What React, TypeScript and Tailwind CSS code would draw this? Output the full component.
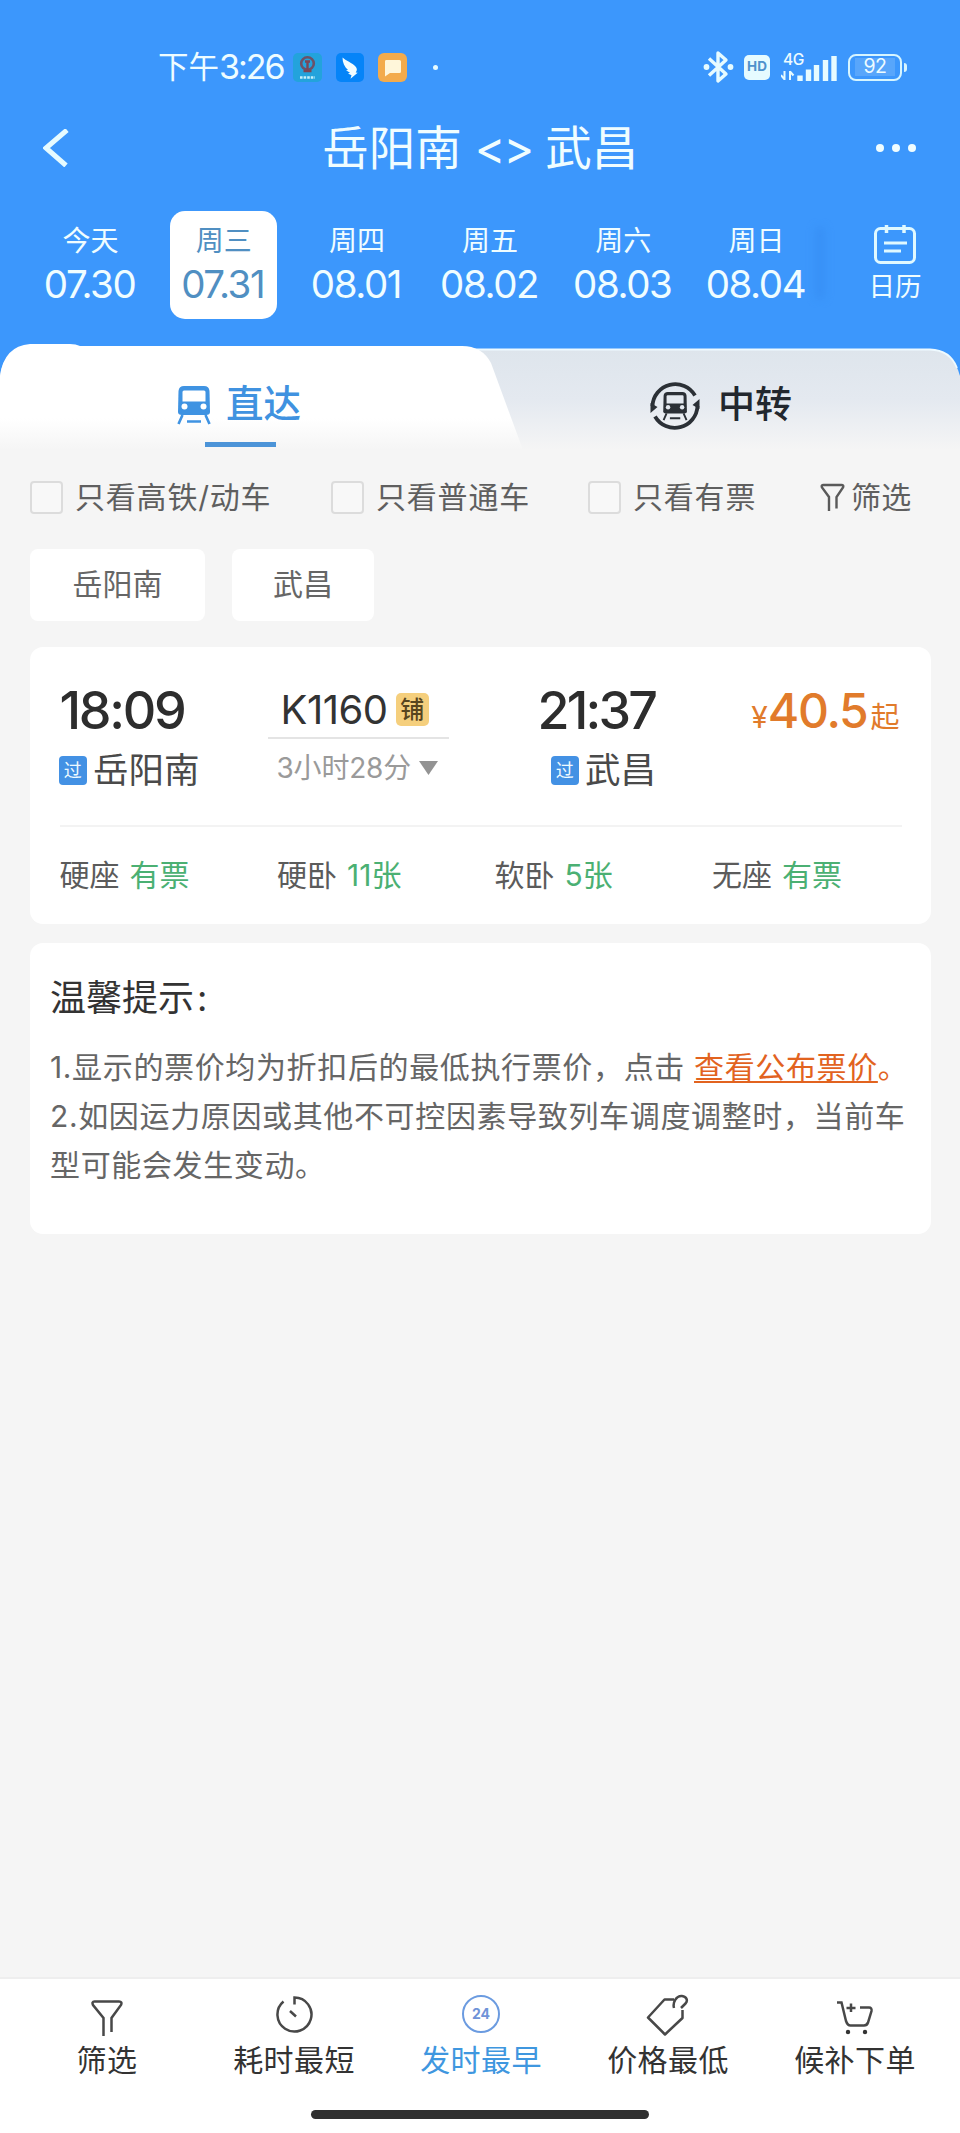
import type { ReactNode } from "react";
import clsx from "clsx";

const DAYS = [
  { label: "今天", date: "07.30" },
  { label: "周三", date: "07.31" },
  { label: "周四", date: "08.01" },
  { label: "周五", date: "08.02" },
  { label: "周六", date: "08.03" },
  { label: "周日", date: "08.04" },
];

const SEATS = [
  { name: "硬座", left: "有票" },
  { name: "硬卧", left: "11张" },
  { name: "软卧", left: "5张" },
  { name: "无座", left: "有票" },
];

function StatusBar() {
  return (
    <div className="flex h-[134px] items-center pl-[158px] pr-[53px] text-[#eefcff]">
      <span className="flex w-[126px] items-center whitespace-nowrap leading-none">
        <span className="text-[30.5px]">下午</span>
        <span className="text-[34px] tracking-[-2px]">3:26</span>
      </span>
      <svg width="29" height="29" viewBox="0 0 29 29" className="ml-[9px]">
        <rect width="29" height="29" rx="5" fill="#23a3dc" />
        <circle cx="14.5" cy="10.5" r="6.3" fill="none" stroke="#6c5268" strokeWidth="2.6" />
        <path d="M12 8.5h5M14.5 8.5v8M10.5 18h8" stroke="#7c4656" strokeWidth="2.4" fill="none" />
        <path d="M7 24.5h15" stroke="#c6f0fa" strokeWidth="2.4" strokeDasharray="2.6 1" />
      </svg>
      <svg width="28" height="29" viewBox="0 0 28 29" className="ml-[13.5px]">
        <rect width="28" height="29" rx="5" fill="#0584f8" />
        <path d="M6.5 4.5c3 3 10 5.500 13 9 1.800 2.200 1.800 4 .2 6l2 .2-7.200 6 1-3.400-3.500-1.700 2-.8-4-2.500 2-.2C8.500 14 6.500 9.500 6.500 4.500z" fill="#f2fcff" />
      </svg>
      <svg width="29" height="29" viewBox="0 0 29 29" className="ml-[14px]">
        <rect width="29" height="29" rx="6" fill="#f3ab4c" />
        <path d="M8 7h13.500a1.500 1.500 0 0 1 1.500 1.500v10a1.500 1.500 0 0 1-1.500 1.500H12l-5 3.500v-15A1.500 1.500 0 0 1 8 7z" fill="#fff6da" />
      </svg>
      <span className="ml-[26px] size-[5px] rounded-full bg-[#e6fbff]" />

      <svg width="31" height="34" viewBox="0 0 31 34" className="ml-auto">
        <path d="M6 8.500 23 24 15 31V3l8 7L6 25.500" fill="none" stroke="#e6fbff" strokeWidth="3.4" strokeLinejoin="round" />
        <circle cx="3.500" cy="17" r="2.900" fill="#e6fbff" />
        <circle cx="27.500" cy="17" r="2.900" fill="#e6fbff" />
      </svg>
      <span className="ml-[10px] flex h-[25px] w-[26px] items-center justify-center rounded-[5px] bg-[#e6fbff] text-[13.5px] font-bold leading-none text-[#4f92cc]">
        HD
      </span>
      <div className="relative ml-[11px] h-[30px] w-[56px]">
        <span className="absolute left-[2px] top-0 text-[15.5px] font-medium leading-none tracking-[-0.3px]">4G</span>
        <svg width="56" height="30" viewBox="0 0 56 30">
          <path d="M3.500 19v9M3.500 27.500 0 23M9 28v-9M9 19.500l3.500 4" stroke="#e6fbff" strokeWidth="2" fill="none" />
          <path d="M19 23.500V29M27.500 17.500V29M35.500 13V29M44.500 8V29M53 4V29" stroke="#e6fbff" strokeWidth="5.4" />
        </svg>
      </div>
      <span className="ml-[11px] flex h-[27px] w-[54px] items-center justify-center rounded-[8px] border-[2.5px] border-[#d6f5ff]">
        <span className="flex h-[18px] w-[40px] items-center justify-center bg-[#58a6fb] text-[19.5px] leading-none tracking-[-0.5px]">92</span>
      </span>
      <span className="ml-[2px] h-[9px] w-[3px] rounded-r bg-[#d6f5ff]" />
    </div>
  );
}

function TitleBar() {
  return (
    <div className="flex h-[28px] items-center justify-between pl-[43px] pr-[44px] text-[#f0fdff]">
      <svg width="27" height="38" viewBox="0 0 27 38">
        <path d="M24 1 3 19 23 36.500" fill="none" stroke="#e6fbff" strokeWidth="5" />
      </svg>
      <h1 className="ml-[15px] flex whitespace-nowrap text-[46.5px] leading-none">
        岳阳南<span className="mx-[13px] tracking-[-2px]">&lt;&gt;</span>武昌
      </h1>
      <div className="flex gap-[7.500px]">
        <span className="size-[8.500px] rounded-full bg-[#f0fdff]" />
        <span className="size-[8.500px] rounded-full bg-[#f0fdff]" />
        <span className="size-[8.500px] rounded-full bg-[#f0fdff]" />
      </div>
    </div>
  );
}

function DateStrip() {
  return (
    <div className="mt-[49px] flex h-[108px]">
      <div className="ml-[24px] grid w-[799px] grid-cols-6">
        {DAYS.map((day, i) => (
          <div key={day.date} className="flex justify-center">
            <button
              className={clsx(
                "flex h-[108px] w-[107px] flex-col items-center rounded-[15px] pt-[16px] leading-none",
                i === 1 ? "bg-white text-[#508fc2]" : "text-[#f0fdff]",
              )}
            >
              <span className="text-[28px] leading-[28px]">{day.label}</span>
              <span className="ml-[-2px] mt-[10px] text-[38.5px] leading-[38px] tracking-[-1.4px]">{day.date}</span>
            </button>
          </div>
        ))}
      </div>
      <span className="ml-[-8px] mt-[16px] h-[72px] w-[10px] bg-[#348af0] opacity-50 blur-[4px]" />
      <div className="ml-[30px] flex w-[80px] flex-col items-center pt-[14px] text-[#f0fdff]">
        <svg width="42" height="39" viewBox="0 0 42 39">
          <rect x="1.500" y="3.500" width="39" height="34" rx="5" fill="none" stroke="#e0f9ff" strokeWidth="3" />
          <path d="M12.500 0v8M30 0v8" stroke="#e0f9ff" strokeWidth="3.500" />
          <path d="M10 18h23M10 26h17" stroke="#e0f9ff" strokeWidth="2.800" />
        </svg>
        <span className="mt-[9px] text-[26.500px] leading-[27px]">日历</span>
      </div>
    </div>
  );
}

function TrainGlyph({ color, hole }: { color: string; hole: string }) {
  return (
    <>
      <path d="M7 0h20q5 0 5.500 5l.5 21q0 3-4 3H5q-4 0-4-3L1.500 5Q2 0 7 0z" fill={color} />
      <path d="M7 4.500h20q1.500 0 1.500 1.500v9.500h-23V6Q5.500 4.500 7 4.500z" fill={hole} />
      <circle cx="7.500" cy="20.500" r="3" fill={hole} />
      <circle cx="26.500" cy="20.500" r="3" fill={hole} />
      <path d="M5.500 29 1.500 38M28.500 29l4 9M10 35.500h14" stroke={color} strokeWidth="2.600" />
    </>
  );
}

function Tabs() {
  return (
    <div className="relative h-[106px] shrink-0">
      {/* the slanted tab sits over the grey one and both fade into the page */}
      <svg width="960" height="106" viewBox="0 0 960 106" className="absolute inset-0">
        <defs>
          <linearGradient id="tabIdle" x1="0" y1="0" x2="0" y2="1">
            <stop offset="0" stopColor="#dee5ec" />
            <stop offset="0.5" stopColor="#e4e9f0" />
            <stop offset="1" stopColor="#f5f5f5" />
          </linearGradient>
          <linearGradient id="tabOn" x1="0" y1="0" x2="0" y2="1">
            <stop offset="0.7" stopColor="#ffffff" />
            <stop offset="1" stopColor="#f5f5f5" />
          </linearGradient>
        </defs>
        <path d="M0 106V32Q3 5 30 5H930Q953 6 960 32V106z" fill="url(#tabIdle)" />
        <path d="M460 5.500H930Q950 6 957 24" fill="none" stroke="#eefaff" strokeWidth="1.800" />
        <path d="M0 106V32Q4 2 30 0H70Q76 0 80 2H462Q482 2 491 19L523 106z" fill="url(#tabOn)" />
      </svg>
      <div className="relative flex h-full">
        <div className="flex w-[481px] flex-col items-center">
          <div className="ml-[-3px] mt-[39px] flex h-[44px] items-center text-[#4092e0]">
            <svg width="34" height="39" viewBox="0 0 34 39">
              <TrainGlyph color="#3f93e2" hole="#ffffff" />
            </svg>
            <span className="ml-[15px] pb-[3px] text-[37.500px] font-medium leading-none">直达</span>
          </div>
          <span className="mt-[15px] h-[5px] w-[71px] bg-[#4c94d8]" />
        </div>
        <div className="flex w-[479px] justify-center text-[#22272e]">
          <div className="mt-[36px] flex h-[52px] items-center">
            <svg width="52" height="52" viewBox="0 0 52 52">
              <path d="M3.500 26A22.800 22.800 0 0 1 46 15.500" fill="none" stroke="#2b3036" strokeWidth="3.800" />
              <path d="M48.500 26A22.800 22.800 0 0 1 6 36.500" fill="none" stroke="#2b3036" strokeWidth="3.800" />
              <path d="M1.500 33V23l7 4zM50.500 19v10l-7-4z" fill="#2b3036" />
              <g transform="translate(13.500 12) scale(.74)">
                <TrainGlyph color="#2b3036" hole="#e4e9f0" />
              </g>
            </svg>
            <span className="ml-[17px] pb-[4px] text-[37px] font-medium leading-none">中转</span>
          </div>
        </div>
      </div>
    </div>
  );
}

function Check({ children, className }: { children: ReactNode; className: string }) {
  return (
    <label className={clsx("flex items-center whitespace-nowrap", className)}>
      <span className="size-[33px] rounded-[4px] border-2 border-[#dcdcdc] bg-[#f8f8f8]" />
      <span className="ml-[12px] pb-[1px] tracking-[0.8px]">{children}</span>
    </label>
  );
}

function FilterRow() {
  return (
    <div className="mt-[31px] flex h-[33px] items-center pl-[30px] text-[30px] leading-none text-[#5f5f5f]">
      <Check className="w-[301px]">只看高铁/动车</Check>
      <Check className="w-[257px]">只看普通车</Check>
      <Check className="w-[232px]">只看有票</Check>
      <svg width="25" height="29" viewBox="0 0 25 29">
        <path d="M9 28V14L2 4.500Q1 2 3.500 2h18q2.500 0 1.500 2.500L16.500 14v11.500" fill="none" stroke="#5a5a5a" strokeWidth="2.400" />
      </svg>
      <span className="ml-[6px] pb-[1px] tracking-[0.3px]">筛选</span>
    </div>
  );
}

function Pass() {
  return (
    <span className="flex size-[28.500px] items-center justify-center rounded-[4px] bg-[#4391e4] text-[18px] leading-none text-[#eefaff]">
      过
    </span>
  );
}

function TrainCard() {
  return (
    <section className="ml-[30px] mr-[29px] mt-[26px] h-[277px] rounded-[13px] bg-white px-[29.500px]">
      <div className="flex h-[180px] border-b-2 border-[#f3f3f3] pt-[38px]">
        <div className="w-[208px]">
          <p className="text-[52px] font-medium leading-[52px] tracking-[-2.300px] text-[#2d2d2d]">18:09</p>
          <div className="ml-[-1px] mt-[15px] flex h-[37px] items-center text-[35.500px] leading-none text-[#4a4a4a]">
            <Pass />
            <span className="ml-[6px]">岳阳南</span>
          </div>
        </div>
        <div className="w-[181px]">
          <div className="flex h-[54px] items-center border-b-2 border-[#e4e4e4] pb-[3px] pl-[13px]">
            <span className="w-[107px] whitespace-nowrap text-[40px] leading-none tracking-[-0.500px] text-[#333333]">K1160</span>
            <span className="ml-[8px] flex size-[33.500px] items-center justify-center rounded-[5px] bg-[#f5cf7d] text-[24px] font-medium leading-none text-[#57451f]">
              铺
            </span>
          </div>
          <div className="mt-[15px] flex items-center pl-[9px] text-[28px] leading-[28px] text-[#9a9a9a]">
            <span className="w-[134px] whitespace-nowrap tracking-[-0.200px]">3小时28分</span>
            <svg width="19" height="14" viewBox="0 0 19 14" className="ml-[8px] shrink-0">
              <path d="M0 0h19L9.500 14z" fill="#939393" />
            </svg>
          </div>
        </div>
        <div className="ml-[90px] w-[120px]">
          <p className="ml-[-1px] whitespace-nowrap text-[52px] font-medium leading-[52px] tracking-[-2.800px] text-[#2d2d2d]">21:37</p>
          <div className="ml-[12px] mt-[15px] flex h-[37px] items-center whitespace-nowrap text-[35.500px] leading-none text-[#4a4a4a]">
            <Pass />
            <span className="ml-[6px]">武昌</span>
          </div>
        </div>
        <div className="ml-auto flex h-[52px] items-baseline whitespace-nowrap pr-[2px] leading-[52px] text-[#e17b2b]">
          <span className="text-[30px]">¥</span>
          <span className="text-[48px] font-medium tracking-[-1.300px]">40.5</span>
          <span className="ml-[3px] text-[29px]">起</span>
        </div>
      </div>
      <div className="mt-[33px] flex text-[30px] leading-[30px]">
        {SEATS.map((seat) => (
          <div key={seat.name} className="flex w-[217.500px] shrink-0 gap-[10px] text-[#5b5b5b]">
            {seat.name}
            <span className="text-[#4bb073]">{seat.left}</span>
          </div>
        ))}
      </div>
    </section>
  );
}

function Tips() {
  return (
    <section className="ml-[30px] mr-[29px] mt-[19px] h-[291px] rounded-[13px] bg-white pl-[20px] pt-[37px]">
      <h2 className="text-[36px] leading-[36px] text-[#333333]">
        温馨提示<span className="ml-[3px]">:</span>
      </h2>
      <div className="mt-[27px] whitespace-nowrap text-[30px] leading-[49px] tracking-[0.640px] text-[#666666]">
        <p>
          1.显示的票价均为折扣后的最低执行票价，点击{" "}
          <a className="text-[#e2631f] underline decoration-2 underline-offset-[3px]">查看公布票价</a>
          <span className="text-[#e2631f]">。</span>
        </p>
        <p>2.如因运力原因或其他不可控因素导致列车调度调整时，当前车</p>
        <p>型可能会发生变动。</p>
      </div>
    </section>
  );
}

function NavItem({ label, active, children }: { label: string; active?: boolean; children: ReactNode }) {
  return (
    <button className={clsx("flex flex-col items-center pt-[14px]", active ? "text-[#3f97df]" : "text-[#333333]")}>
      <svg width="46" height="46" viewBox="0 0 46 46" fill="none" stroke="#484848" strokeWidth="2.500">
        {children}
      </svg>
      <span className="mt-[6px] text-[30px] leading-[30px] tracking-[0.400px]">{label}</span>
    </button>
  );
}

function BottomNav() {
  return (
    <nav className="mt-auto h-[156px] border-t-2 border-[#eeeeee] bg-white">
      <div className="ml-[13.500px] grid h-[131px] w-[935px] grid-cols-5">
        <NavItem label="筛选">
          <path d="M19.500 43V25L9 12Q7.500 8.500 10.500 8.500H35Q38.500 8.500 37 12L27.500 25v14" />
        </NavItem>
        <NavItem label="耗时最短">
          <path d="M23.500 11.500V4.500A17 17 0 1 1 12.500 8.500M19 18l6 5.500" />
        </NavItem>
        <NavItem label="发时最早" active>
          <circle cx="23" cy="21" r="18" stroke="#6b9be0" strokeWidth="2" />
          <text x="23" y="26" textAnchor="middle" fill="#6f93d8" stroke="none" fontSize="14" fontWeight="700">
            24
          </text>
        </NavItem>
        <NavItem label="价格最低">
          <path d="M29 6.500H19.500L3 24.500 20 41.500 37.500 25V17M29 15C27.500 10 31 2.500 37 3c5 .5 6 5 3.500 7.500L36 15" strokeLinejoin="round" />
        </NavItem>
        <NavItem label="候补下单">
          <path d="M5 9.500H9.500L14 28Q15.500 32.500 18.500 32.500H32Q35 32.500 36 29.500L39.500 18Q40 14.500 37 14.500H28M19 10.500v8.500M14.500 15h9" />
          <circle cx="16" cy="39" r="2.200" fill="#333333" stroke="none" />
          <circle cx="33" cy="39" r="2.200" fill="#333333" stroke="none" />
        </NavItem>
      </div>
      <div className="mx-auto h-[9px] w-[338px] rounded-full bg-[#303030]" />
    </nav>
  );
}

export default function App() {
  return (
    <div className="flex h-[2133px] w-[960px] flex-col overflow-hidden bg-[#f5f5f5] font-['Inter','Noto_Sans_CJK_SC',sans-serif]">
      <header className="mb-[-40px] h-[384px] shrink-0 bg-[#3c97fc]">
        <StatusBar />
        <TitleBar />
        <DateStrip />
      </header>
      <Tabs />
      <FilterRow />
      <div className="mt-[35px] flex gap-[27px] pl-[30px] text-[30px] leading-[70px] text-[#666666]">
        <button className="h-[72px] w-[175px] rounded-[8px] bg-white pb-[2px]">岳阳南</button>
        <button className="h-[72px] w-[142px] rounded-[8px] bg-white pb-[2px]">武昌</button>
      </div>
      <TrainCard />
      <Tips />
      <BottomNav />
    </div>
  );
}
